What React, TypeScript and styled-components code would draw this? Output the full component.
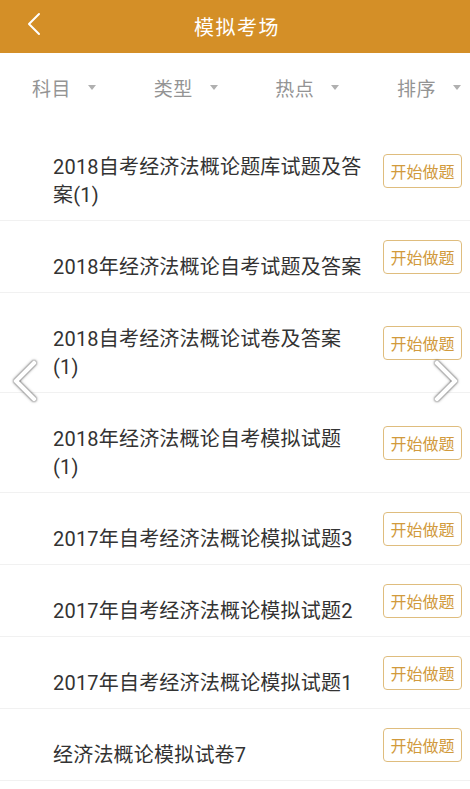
import React from "react";
import styled, { createGlobalStyle } from "styled-components";

const colors = {
  orange: "#d48f27",
  white: "#ffffff",
  text: "#333333",
  filter: "#949494",
  caret: "#b0b0b0",
  line: "#f1f1f1",
  gold: "#d19a3c",
  goldBorder: "#dfbd7e",
};

const papers: string[] = [
  "2018自考经济法概论题库试题及答案(1)",
  "2018年经济法概论自考试题及答案",
  "2018自考经济法概论试卷及答案(1)",
  "2018年经济法概论自考模拟试题(1)",
  "2017年自考经济法概论模拟试题3",
  "2017年自考经济法概论模拟试题2",
  "2017年自考经济法概论模拟试题1",
  "经济法概论模拟试卷7",
];

const filters: string[] = ["科目", "类型", "热点", "排序"];

// Mock exam list page
const App = (): JSX.Element => {
  return (
    <Page>
      <GlobalStyle />
      <Header>
        <BackButton aria-label="返回">
          <svg width="16" height="24" viewBox="0 0 16 24">
            <polyline
              points="13,2 3,12 13,22"
              fill="none"
              stroke={colors.white}
              strokeWidth="2"
              strokeLinecap="round"
              strokeLinejoin="round"
            />
          </svg>
        </BackButton>
        <Title>模拟考场</Title>
      </Header>

      <FilterBar>
        {filters.map((f) => (
          <FilterItem key={f}>
            {f}
            <Caret />
          </FilterItem>
        ))}
      </FilterBar>

      <List>
        {papers.map((p, i) => (
          <Row key={i}>
            <PaperName>{p}</PaperName>
            <StartButton>开始做题</StartButton>
          </Row>
        ))}
      </List>

      <SideArrow side="left">
        <svg width="26" height="42" viewBox="0 0 26 42">
          <polyline
            points="22,3 4,21 22,39"
            fill="none"
            stroke={colors.white}
            strokeWidth="4.5"
            strokeLinecap="round"
            strokeLinejoin="round"
          />
        </svg>
      </SideArrow>
      <SideArrow side="right">
        <svg width="26" height="42" viewBox="0 0 26 42">
          <polyline
            points="4,3 22,21 4,39"
            fill="none"
            stroke={colors.white}
            strokeWidth="4.5"
            strokeLinecap="round"
            strokeLinejoin="round"
          />
        </svg>
      </SideArrow>
    </Page>
  );
};

// Styled components
const GlobalStyle = createGlobalStyle`
  html, body {
    margin: 0;
    padding: 0;
    background: ${colors.white};
  }
  body {
    font-family: Roboto, "Noto Sans CJK SC", sans-serif;
  }
  * {
    box-sizing: border-box;
  }
`;
const Page = styled.div`
  position: relative;
  width: 470px;
  height: 789px;
  overflow: hidden;
  background: ${colors.white};
`;
const Header = styled.div`
  position: relative;
  display: flex;
  align-items: center;
  justify-content: center;
  height: 53px;
  background: ${colors.orange};
`;
const BackButton = styled.div`
  position: absolute;
  left: 26px;
  top: 12px;
  display: flex;
`;
const Title = styled.div`
  color: ${colors.white};
  font-size: 20px;
  letter-spacing: 1.5px;
  padding-left: 4px;
`;
const FilterBar = styled.div`
  display: flex;
  justify-content: space-between;
  align-items: center;
  height: 68px;
  padding: 0 9px 0 32px;
`;
const FilterItem = styled.div`
  display: flex;
  align-items: center;
  gap: 17px;
  font-size: 19px;
  color: ${colors.filter};
  letter-spacing: 0.5px;
`;
const Caret = styled.span`
  width: 0;
  height: 0;
  border-left: 4.5px solid transparent;
  border-right: 4.5px solid transparent;
  border-top: 5px solid ${colors.caret};
`;
const List = styled.div`
  display: flex;
  flex-direction: column;
`;
const Row = styled.div`
  display: flex;
  align-items: center;
  padding: 0 8px 0 53px;
  border-bottom: 1px solid ${colors.line};
`;
const PaperName = styled.div`
  flex: 1;
  margin-right: 20px;
  padding: 32px 0 11px;
  font-size: 20px;
  letter-spacing: 0.2px;
  line-height: 28px;
  color: ${colors.text};
`;
const StartButton = styled.div`
  display: flex;
  align-items: center;
  justify-content: center;
  width: 79px;
  height: 34px;
  border: 1.5px solid ${colors.goldBorder};
  border-radius: 4px;
  color: ${colors.gold};
  font-size: 16px;
`;
const SideArrow = styled.div<{ side: "left" | "right" }>`
  position: absolute;
  top: 360px;
  ${(p) => (p.side === "left" ? "left: 12px;" : "right: 11px;")}
  display: flex;
  filter: drop-shadow(0 0 1px rgba(0, 0, 0, 0.6))
    drop-shadow(0 0 1.5px rgba(0, 0, 0, 0.35));
`;

export default App;
